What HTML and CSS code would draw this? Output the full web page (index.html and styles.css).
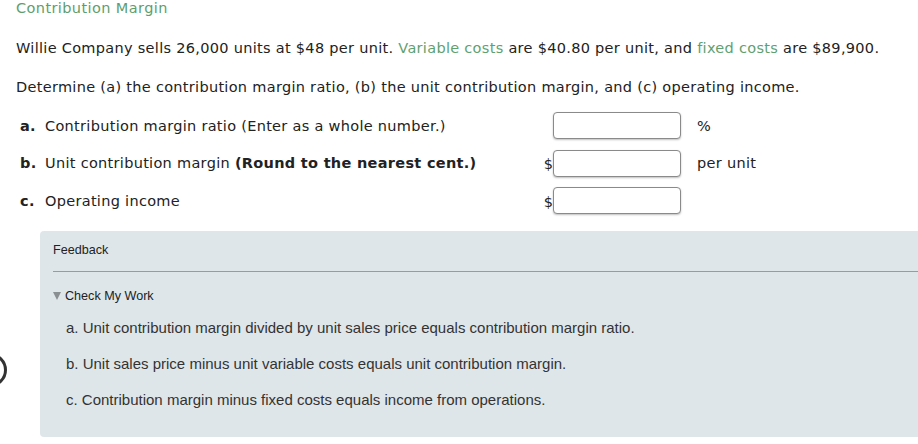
FILE: index.html
```html
<!DOCTYPE html>
<html>
<head>
<meta charset="utf-8">
<link rel="stylesheet" href="styles.css">
</head>
<body>
<div class="page">
  <div class="title">Contribution Margin</div>
  <p class="para">Willie Company sells 26,000 units at $48 per unit. <span class="term">Variable costs</span> are $40.80 per unit, and <span class="term">fixed costs</span> are $89,900.</p>
  <p class="para p2">Determine (a) the contribution margin ratio, (b) the unit contribution margin, and (c) operating income.</p>
  <div class="qgrid">
    <div class="row">
      <div class="label"><b class="letter">a.</b><span>Contribution margin ratio (Enter as a whole number.)</span></div>
      <div class="cur"></div>
      <div class="box"></div>
      <div class="unit">%</div>
    </div>
    <div class="row">
      <div class="label"><b class="letter">b.</b><span>Unit contribution margin <b>(Round to the nearest cent.)</b></span></div>
      <div class="cur">$</div>
      <div class="box"></div>
      <div class="unit">per unit</div>
    </div>
    <div class="row">
      <div class="label"><b class="letter">c.</b><span>Operating income</span></div>
      <div class="cur">$</div>
      <div class="box"></div>
      <div class="unit"></div>
    </div>
  </div>
  <div class="feedback">
    <div class="fb-head">Feedback</div>
    <div class="fb-rule"></div>
    <div class="fb-toggle"><span class="tri"></span>Check My Work</div>
    <div class="fb-items">
      <div class="fb-item">a. Unit contribution margin divided by unit sales price equals contribution margin ratio.</div>
      <div class="fb-item">b. Unit sales price minus unit variable costs equals unit contribution margin.</div>
      <div class="fb-item">c. Contribution margin minus fixed costs equals income from operations.</div>
    </div>
  </div>
  <div class="edge-circle"></div>
</div>
</body>
</html>
```
FILE: styles.css
```css
html, body {
  margin: 0;
  padding: 0;
  background: #ffffff;
  overflow: hidden;
}
.page {
  position: relative;
  width: 918px;
  height: 444px;
  font-family: "DejaVu Sans", Verdana, sans-serif;
  font-size: 14.5px;
  letter-spacing: 0.3px;
  color: #222;
  overflow: hidden;
}
.title {
  padding-left: 16px;
  line-height: 17px;
  font-size: 14.5px;
  letter-spacing: 0.4px;
  color: #5e9e6e;
}
.para {
  margin: 21px 0 0 0;
  padding-left: 16px;
  line-height: 20px;
  white-space: nowrap;
}
.p2 {
  margin-top: 19px;
}
.term {
  color: #5fa16e;
}
.qgrid {
  margin-top: 10px;
  display: flex;
  flex-direction: column;
}
.row {
  display: grid;
  grid-template-columns: 520px 13px 128px 1fr;
  align-items: center;
  height: 37.5px;
  padding-left: 20px;
}
.label {
  display: flex;
  align-items: center;
  white-space: nowrap;
}
.letter {
  width: 25px;
}
.cur {
  text-align: right;
  letter-spacing: 0;
  padding-top: 2px;
}
.box {
  box-sizing: border-box;
  height: 27px;
  border: 1px solid #8a8a8a;
  border-radius: 4px;
  background: #fff;
  box-shadow: 0 1px 2px rgba(0,0,0,0.25);
}
.unit {
  padding-left: 16px;
}
.feedback {
  margin-top: 11px;
  margin-left: 40px;
  width: 900px;
  height: 206px;
  background: #dfe6e9;
  border-radius: 4px;
  font-family: "Liberation Sans", Arial, sans-serif;
  letter-spacing: 0;
  color: #222;
  box-sizing: border-box;
  padding-left: 13px;
  padding-top: 11px;
}
.fb-head {
  font-size: 12.6px;
  line-height: 16px;
}
.fb-rule {
  margin-top: 13px;
  height: 1px;
  border-top: 1px solid #979c9f;
}
.fb-toggle {
  margin-top: 15px;
  font-size: 12.6px;
  line-height: 16px;
  display: flex;
  align-items: center;
}
.tri {
  width: 0;
  height: 0;
  border-left: 4.5px solid transparent;
  border-right: 4.5px solid transparent;
  border-top: 8px solid #8a8f92;
  margin-right: 4px;
}
.fb-items {
  padding-left: 13px;
  margin-top: 16px;
  display: flex;
  flex-direction: column;
  gap: 20px;
}
.fb-item {
  font-size: 15px;
  line-height: 16px;
  color: #333;
}
.edge-circle {
  position: absolute;
  left: -27px;
  top: 353px;
  width: 28px;
  height: 28px;
  border: 3px solid #333;
  border-radius: 50%;
}
```
